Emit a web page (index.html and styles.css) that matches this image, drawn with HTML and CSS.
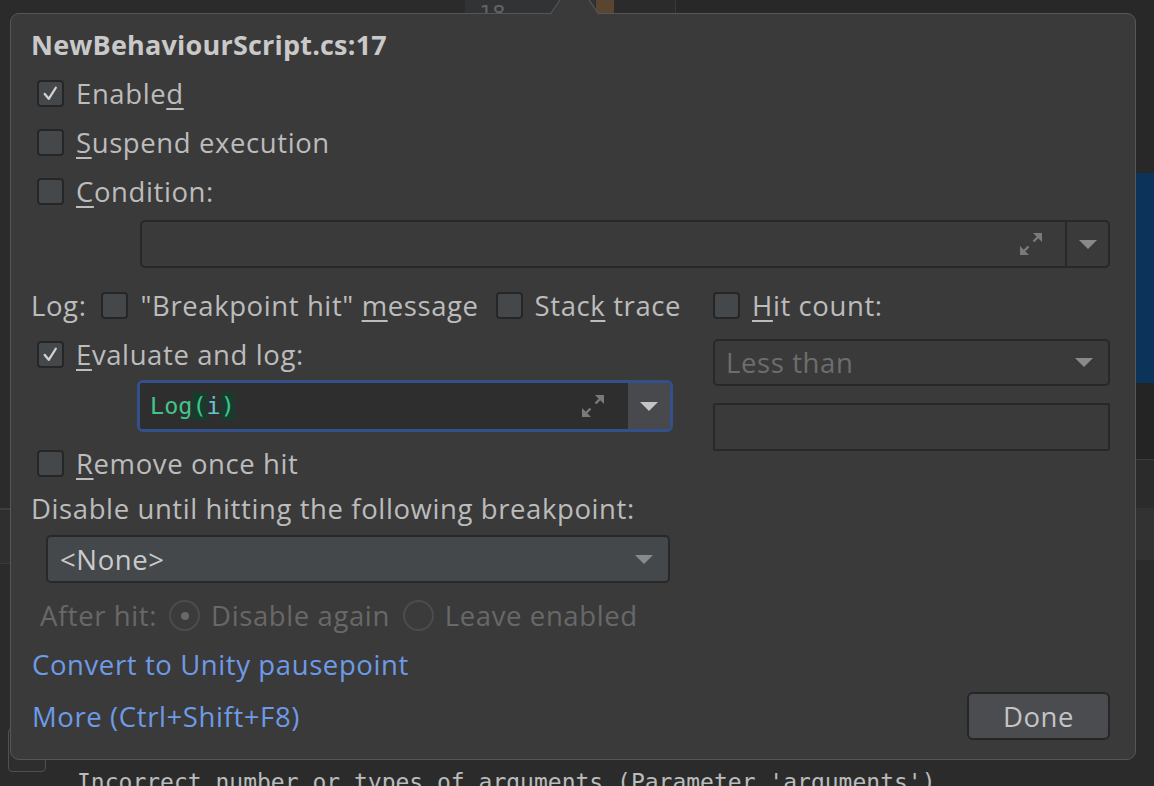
FILE: index.html
```html
<!DOCTYPE html>
<html>
<head>
<meta charset="utf-8">
<link rel="stylesheet" href="styles.css">
</head>
<body>
<div class="editor">
  <div class="ed-gutter"><span class="lineno">18</span></div>
  <div class="ed-mark"></div>
  <div class="ed-sep"></div>
  <div class="ed-right-top"></div>
  <div class="ed-blue"></div>
  <div class="ed-right-dark"></div>
  <div class="ed-right-band"></div>
  <div class="ed-left-band"></div>
  <div class="ed-btn"></div>
  <div class="ed-console">Incorrect number or types of arguments (Parameter 'arguments')</div>
</div>

<div class="popup">
  <svg class="arrow" width="51" height="15" viewBox="0 0 51 15">
    <polygon points="1,15 11.5,0 39.5,0 50,15" fill="#3a3a3a"/>
    <polyline points="1,14.5 11,0" fill="none" stroke="#565656" stroke-width="1.2"/>
    <polyline points="40,0 50,14.5" fill="none" stroke="#565656" stroke-width="1.2"/>
  </svg>

  <div class="title">NewBehaviourScript.cs:17</div>

  <div class="row"><span class="cb on"><svg viewBox="0 0 26 26"><path d="M6.5 13.5 L11 19 L19 6.5"/></svg></span><span class="lbl">Enable<u>d</u></span></div>
  <div class="row"><span class="cb"></span><span class="lbl"><u>S</u>uspend execution</span></div>
  <div class="row"><span class="cb"></span><span class="lbl"><u>C</u>ondition:</span></div>

  <div class="field cond">
    <div class="field-main">
      <svg class="expand" viewBox="0 0 26 26"><polygon points="15,2 24,2 24,11"/><path d="M21 5 L15.5 10.5"/><polygon points="2,15 2,24 11,24"/><path d="M5 21 L10.5 15.5"/></svg>
    </div>
    <div class="field-btn"><span class="tri"></span></div>
  </div>

  <div class="mid">
    <div class="mid-left">
      <div class="row logrow">
        <span class="lbl">Log:</span>
        <span class="cb m16"></span><span class="lbl">"Breakpoint hit" <u>m</u>essage</span>
        <span class="cb m18"></span><span class="lbl">Stac<u>k</u> trace</span>
      </div>
      <div class="row"><span class="cb on"><svg viewBox="0 0 26 26"><path d="M6.5 13.5 L11 19 L19 6.5"/></svg></span><span class="lbl"><u>E</u>valuate and log:</span></div>
      <div class="field logfield">
        <div class="field-main">
          <span class="code"><span class="c-fn">Log</span><span class="c-br">(</span><span class="c-var">i</span><span class="c-br">)</span></span>
          <svg class="expand" viewBox="0 0 26 26"><polygon points="15,2 24,2 24,11"/><path d="M21 5 L15.5 10.5"/><polygon points="2,15 2,24 11,24"/><path d="M5 21 L10.5 15.5"/></svg>
        </div>
        <div class="field-btn"><span class="tri light"></span></div>
      </div>
      <div class="row remove"><span class="cb"></span><span class="lbl"><u>R</u>emove once hit</span></div>
    </div>
    <div class="mid-right">
      <div class="row hitrow"><span class="cb"></span><span class="lbl"><u>H</u>it count:</span></div>
      <div class="combo less"><span class="combo-text">Less than</span><span class="tri"></span></div>
      <div class="textbox"></div>
    </div>
  </div>

  <div class="plain">Disable until hitting the following breakpoint:</div>
  <div class="combo none"><span class="combo-text">&lt;None&gt;</span><span class="tri"></span></div>

  <div class="row after">
    <span class="lbl dis">After hit:</span>
    <span class="radio sel m13"></span><span class="lbl dis">Disable again</span>
    <span class="radio m14"></span><span class="lbl dis">Leave enabled</span>
  </div>

  <div class="row link-row"><span class="link">Convert to Unity pausepoint</span></div>
  <div class="bottom">
    <span class="link">More (Ctrl+Shift+F8)</span>
    <span class="btn">Done</span>
  </div>
</div>
</body>
</html>
```

FILE: styles.css
```css
* { box-sizing: border-box; }
html, body { margin: 0; padding: 0; }
body {
  width: 1154px;
  height: 786px;
  overflow: hidden;
  background: #2b2b2b;
  font-family: "Open Sans", "Noto Sans", sans-serif;
  color: #bcbcbc;
  position: relative;
}

/* backdrop editor pieces */
.editor { position: absolute; inset: 0; }
.ed-gutter { position: absolute; left: 465px; top: 0; width: 130px; height: 60px; background: #313335; }
.lineno { position: absolute; left: 14px; top: 1px; font-family: "DejaVu Sans Mono", monospace; font-size: 22px; color: #606366; }
.ed-mark { position: absolute; left: 596px; top: 0; width: 18px; height: 60px; background: #5a4530; }
.ed-sep { position: absolute; left: 675px; top: 0; width: 1px; height: 60px; background: #3a3a3a; }
.ed-right-top { position: absolute; left: 676px; top: 0; right: 0; height: 173px; background: #282828; }
.ed-blue { position: absolute; left: 1120px; top: 173px; right: 0; height: 210px; background: #0c3359; }
.ed-right-dark { position: absolute; left: 1120px; top: 383px; right: 0; height: 77px; background: #242424; border-bottom: 1px solid #3a3a3a; }
.ed-right-band { position: absolute; left: 1120px; top: 508px; right: 0; height: 52px; background: #323232; }
.ed-left-band { position: absolute; left: 0; top: 508px; width: 30px; height: 56px; background: #2f2f2f; border-top: 2px solid #3e3e3e; border-bottom: 1px solid #3a3a3a; }
.ed-btn { position: absolute; left: 8px; top: 728px; width: 38px; height: 44px; border: 1px solid #505050; border-radius: 4px; background: #2e2e2e; }
.ed-console { position: absolute; left: 77px; top: 768px; font-family: "DejaVu Sans Mono", monospace; font-size: 23px; line-height: 28px; color: #bbbbbb; white-space: pre; }

/* popup */
.popup {
  position: absolute;
  left: 10px;
  top: 13px;
  width: 1126px;
  height: 747px;
  background: #3a3a3a;
  border: 1px solid #565656;
  border-radius: 9px;
  padding: 5px 25px 0 20px;
  display: flex;
  flex-direction: column;
  font-size: 27.5px;
  letter-spacing: 0.6px;
}
.arrow { position: absolute; left: 538px; top: -14px; }

.title { height: 50px; display: flex; align-items: center; font-weight: 700; color: #c9c9c9; font-size: 27px; letter-spacing: 0.2px; }

.row { height: 49px; display: flex; align-items: center; white-space: nowrap; }
.lbl { line-height: 1; }
u { text-decoration-thickness: 1.5px; text-underline-offset: 4px; }

.cb {
  width: 27px; height: 27px;
  margin-left: 6px; margin-right: 12px;
  background: #45484b;
  border: 2px solid #262626;
  border-radius: 4px;
  flex: none;
  display: flex;
}
.cb svg { width: 100%; height: 100%; }
.cb svg path { fill: none; stroke: #d2d2d2; stroke-width: 2.6; stroke-linecap: round; stroke-linejoin: round; }
.logrow .cb { margin-right: 12px; }
.cb.m16 { margin-left: 15px; }
.cb.m18 { margin-left: 17px; }

/* fields */
.field {
  display: flex;
  border: 2px solid #282828;
  border-radius: 5px;
}
.field.cond { margin-top: 4px; margin-left: 109px; width: 970px; height: 48px; }
.field-main { flex: 1; display: flex; align-items: center; justify-content: flex-end; padding-right: 21px; }
.field-btn { width: 43px; border-left: 2px solid #282828; display: flex; align-items: center; justify-content: center; }
.expand { width: 26px; height: 26px; }
.expand polygon { fill: #7a7a7a; }
.expand path { stroke: #7a7a7a; stroke-width: 2.4; }

.tri { width: 0; height: 0; border-left: 9px solid transparent; border-right: 9px solid transparent; border-top: 9px solid #8a8a8a; display: block; }
.tri.light { border-top-color: #c4c4c4; }

.logfield {
  margin-top: 1px; margin-left: 106px; width: 536px; height: 52px;
  border: 3px solid #33508a;
  border-radius: 6px;
  box-shadow: inset 0 0 0 1px #1e2a40;
  overflow: hidden;
}
.logfield .field-main { background: #2e2e2e; justify-content: space-between; padding-left: 10px; padding-right: 22px; }
.logfield .field-btn { width: 42px; background: #47494c; border-left: none; }
.code { font-family: "DejaVu Sans Mono", monospace; font-size: 23.5px; line-height: 30px; letter-spacing: 0; }
.c-fn { color: #3fc58b; }
.c-br { color: #3fc58b; background: #173c2e; }
.c-var { color: #62c4cc; }

.mid { display: flex; margin-top: 13px; }
.mid-left { width: 682px; display: flex; flex-direction: column; }
.mid-right { width: 397px; display: flex; flex-direction: column; }
.remove { margin-top: 7px; }
.hitrow .cb { margin-left: 0; margin-right: 12px; }

.combo {
  display: flex; align-items: center; justify-content: space-between;
  border: 2px solid #282828; border-radius: 5px;
  padding: 0 15px 0 11px;
}
.combo.less { margin-top: 9px; height: 47px; }
.combo.less .combo-text { color: #6d6d6d; }
.textbox { margin-top: 17px; height: 48px; border: 2px solid #282828; border-radius: 2px; }

.plain { height: 40px; display: flex; align-items: center; margin-top: 0; }
.combo.none { margin-top: 7px; margin-left: 15px; width: 624px; height: 48px; background: #45484b; padding-left: 12px; }
.combo.none .combo-text { color: #cacaca; }

.after { margin-top: 8px; }
.dis { color: #686868; }
.after .lbl:first-child { margin-left: 9px; }
.radio {
  width: 31px; height: 31px; border-radius: 50%;
  border: 2px solid #4c4c4c; background: #3b3b3b;
  display: flex; align-items: center; justify-content: center;
  margin-right: 11px; flex: none;
}
.radio.sel::after { content: ""; width: 8px; height: 8px; border-radius: 50%; background: #686868; }
.radio.m13 { margin-left: 12px; }
.radio.m14 { margin-left: 13px; }

.link { color: #6e9ae6; margin-left: 1px; }
.bottom { margin-top: 3px; height: 48px; display: flex; align-items: center; justify-content: space-between; }
.btn {
  width: 143px; height: 48px;
  background: #4a4c4f; border: 2px solid #262626; border-radius: 6px;
  display: flex; align-items: center; justify-content: center;
  color: #c4c4c4;
}
```
